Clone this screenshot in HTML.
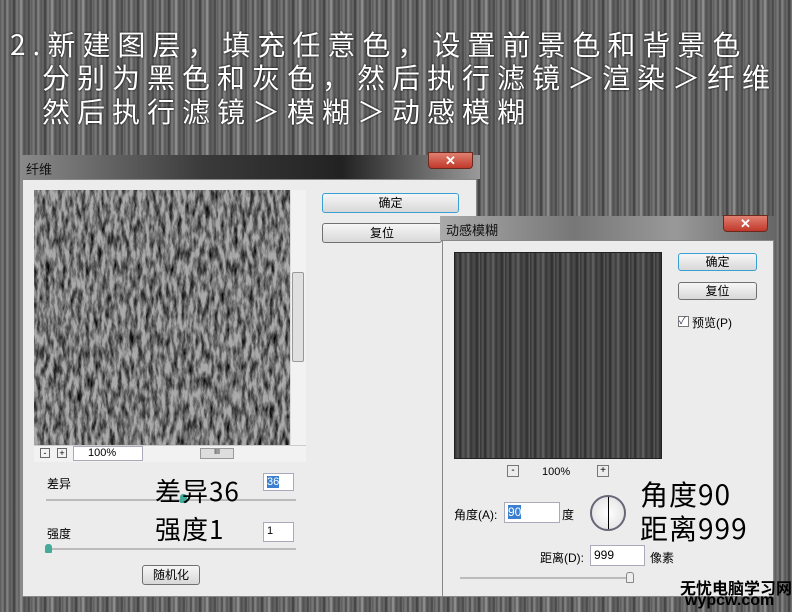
<!DOCTYPE html>
<html><head><meta charset="utf-8"><style>
*{margin:0;padding:0;box-sizing:border-box}
body{width:792px;height:612px;overflow:hidden;position:relative;font-family:"Liberation Sans","Noto Sans CJK SC",sans-serif;
background:repeating-linear-gradient(90deg,#5a5a5a 0,#7c7c7c 3px,#454545 5px,#8a8a8a 7px,#555 10px,#6c6c6c 12px,#3a3a3a 14px,#808080 17px,#5a5a5a 19px,#9a9a9a 21px,#4e4e4e 24px,#666 27px,#434343 29px,#777 31px);}
.h{position:absolute;color:#fff;font-family:"WenQuanYi Zen Hei","Noto Sans CJK SC",sans-serif;font-size:28px;letter-spacing:7px;line-height:32px;white-space:nowrap;text-shadow:0 0 2px #000}
.abs{position:absolute}
.title{position:absolute;height:24px;background:linear-gradient(90deg,#8a8a8a,#3a3a3a 40%,#222 70%,#9a9a9a);color:#111;font-size:13px;padding:4px 6px}
.dlg{position:absolute;background:#ececec;border:1px solid #888}
.btn{position:absolute;background:linear-gradient(#f6f6f6,#d8d8d8);border:1px solid #707070;border-radius:3px;font-size:12px;text-align:center;line-height:18px;color:#000}
.close{position:absolute;width:45px;height:17px;background:linear-gradient(#e08070,#c0392b);border:1px solid #6a2a20;border-radius:0 0 4px 4px;color:#fff;font-size:13px;text-align:center;line-height:15px;font-weight:bold}
.lbl{position:absolute;font-size:12px;color:#000}
.inp{position:absolute;background:#fff;border:1px solid #aab;font-size:11px;padding:2px 3px}
.hw{position:absolute;font-family:"WenQuanYi Zen Hei","Noto Sans CJK SC",sans-serif;font-size:26px;color:#000;letter-spacing:1px}
</style></head><body>
<div class="h" style="left:10px;top:28px">2.新建图层，填充任意色，设置前景色和背景色</div>
<div class="h" style="left:42px;top:61px">分别为黑色和灰色，然后执行滤镜＞渲染＞纤维</div>
<div class="h" style="left:42px;top:95px">然后执行滤镜＞模糊＞动感模糊</div>

<!-- fiber dialog -->
<div class="title" style="left:20px;top:155px;width:460px">纤维</div>
<div class="close" style="left:428px;top:152px">✕</div>
<div class="dlg" style="left:22px;top:179px;width:455px;height:418px"></div>
<svg class="abs" style="left:34px;top:190px" width="256" height="255">
<filter id="n"><feTurbulence type="fractalNoise" baseFrequency="0.25 0.07" numOctaves="5" seed="3"/><feColorMatrix type="matrix" values="0 0 0 0 0 0 0 0 0 0 0 0 0 0 0 0 0 0 -1.8 1.2"/></filter>
<rect width="256" height="255" fill="#aaaaaa"/><rect width="256" height="255" filter="url(#n)"/></svg>
<div class="abs" style="left:290px;top:190px;width:16px;height:255px;background:#f2f2f2;border-left:1px solid #ddd"></div>
<div class="abs" style="left:292px;top:272px;width:12px;height:90px;background:#e0e0e0;border:1px solid #999;border-radius:2px"></div>
<div class="abs" style="left:34px;top:445px;width:272px;height:17px;background:#f2f2f2;border-top:1px solid #ccc"></div>
<div class="abs" style="left:40px;top:448px;width:10px;height:10px;border:1px solid #666;font-size:9px;line-height:8px;text-align:center">-</div>
<div class="abs" style="left:57px;top:448px;width:10px;height:10px;border:1px solid #666;font-size:9px;line-height:8px;text-align:center">+</div>
<div class="inp" style="left:73px;top:446px;width:70px;height:15px;padding:0 0 0 14px;line-height:13px">100%</div>
<div class="abs" style="left:200px;top:448px;width:34px;height:11px;background:#ddd;border:1px solid #999;font-size:7px;text-align:center">III</div>
<div class="btn" style="left:322px;top:193px;width:137px;height:20px;border-color:#3c9fd4">确定</div>
<div class="btn" style="left:322px;top:223px;width:120px;height:20px">复位</div>
<div class="lbl" style="left:47px;top:475px">差异</div>
<div class="abs" style="left:46px;top:499px;width:250px;height:2px;background:#bbb"></div>
<div class="abs" style="left:180px;top:494px;width:7px;height:9px;background:#4a9;border-radius:3px 3px 1px 1px"></div>
<div class="inp" style="left:263px;top:473px;width:31px;height:18px"><span style="background:#3a7fd0;color:#fff">36</span></div>
<div class="hw" style="left:155px;top:472px">差异36</div>
<div class="lbl" style="left:47px;top:525px">强度</div>
<div class="abs" style="left:46px;top:548px;width:250px;height:2px;background:#bbb"></div>
<div class="abs" style="left:45px;top:544px;width:7px;height:9px;background:#4a9;border-radius:3px 3px 1px 1px"></div>
<div class="inp" style="left:263px;top:522px;width:31px;height:20px">1</div>
<div class="hw" style="left:155px;top:510px">强度1</div>
<div class="btn" style="left:142px;top:565px;width:58px;height:20px">随机化</div>

<!-- motion blur dialog -->
<div class="title" style="left:440px;top:216px;width:336px;background:linear-gradient(90deg,#aaa,#777 40%,#999 70%,#666)">动感模糊</div>
<div class="close" style="left:723px;top:215px">✕</div>
<div class="dlg" style="left:442px;top:240px;width:332px;height:357px"></div>
<div class="abs" style="left:454px;top:252px;width:208px;height:207px;border:1px solid #222;background:repeating-linear-gradient(90deg,#333 0,#555 3px,#2a2a2a 5px,#5a5a5a 8px,#3c3c3c 11px,#666 13px,#353535 16px,#4e4e4e 19px,#2c2c2c 22px,#606060 25px)"></div>
<div class="abs" style="left:507px;top:465px;width:12px;height:12px;border:1px solid #777;font-size:10px;line-height:9px;text-align:center">-</div>
<div class="lbl" style="left:542px;top:466px;font-size:11px">100%</div>
<div class="abs" style="left:597px;top:465px;width:12px;height:12px;border:1px solid #777;font-size:10px;line-height:9px;text-align:center">+</div>
<div class="btn" style="left:678px;top:253px;width:79px;height:18px;line-height:16px;border-color:#3c9fd4">确定</div>
<div class="btn" style="left:678px;top:282px;width:79px;height:18px;line-height:16px">复位</div>
<div class="abs" style="left:678px;top:316px;width:11px;height:11px;border:1px solid #777;background:#fff;font-size:10px;line-height:9px;color:#335">✓</div>
<div class="lbl" style="left:692px;top:314px">预览(P)</div>
<div class="lbl" style="left:454px;top:506px">角度(A):</div>
<div class="inp" style="left:504px;top:502px;width:56px;height:21px"><span style="background:#3a7fd0;color:#fff;font-size:12px">90</span></div>
<div class="lbl" style="left:562px;top:506px">度</div>
<div class="abs" style="left:590px;top:495px;width:36px;height:36px;border:2px solid #667;border-radius:50%;background:radial-gradient(#fff,#ddd)"><div style="position:absolute;left:16px;top:0;width:1px;height:32px;background:#000"></div></div>
<div class="hw" style="left:640px;top:474px;font-size:28px">角度90</div>
<div class="hw" style="left:640px;top:508px;font-size:28px">距离999</div>
<div class="lbl" style="left:540px;top:549px">距离(D):</div>
<div class="inp" style="left:590px;top:545px;width:55px;height:21px;font-size:12px">999</div>
<div class="lbl" style="left:650px;top:549px">像素</div>
<div class="abs" style="left:460px;top:577px;width:170px;height:2px;background:#bbb"></div>
<div class="abs" style="left:626px;top:572px;width:8px;height:11px;background:#eee;border:1px solid #888;border-radius:3px 3px 1px 1px"></div>
<div class="abs" style="left:680px;top:575px;font-size:16px;font-weight:bold;color:#000;font-family:'Noto Sans CJK SC',sans-serif">无忧电脑学习网</div>
<div class="abs" style="left:685px;top:593px;font-size:16px;font-weight:bold;color:#000;line-height:16px">wypcw.com</div>
</body></html>
